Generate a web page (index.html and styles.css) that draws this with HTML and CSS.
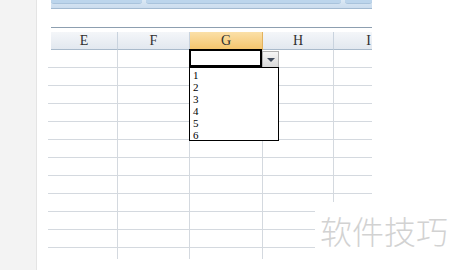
FILE: index.html
```html
<!DOCTYPE html>
<html>
<head>
  <meta charset="UTF-8">
  <title>数据有效性下拉列表</title>
  <link rel="stylesheet" href="styles.css">
</head>
<body>
  <div class="side"></div>
  <div class="main">
    <!-- 功能区底边 -->
    <div class="ribbon">
      <span class="seg s1"></span>
      <span class="seg s2"></span>
      <span class="seg s3"></span>
    </div>

    <div class="sheet">
      <div class="rule"></div>
      <div class="row head">
        <div class="col">E</div>
        <div class="col">F</div>
        <div class="col sel">G</div>
        <div class="col">H</div>
        <div class="col">I</div>
      </div>

      <div class="row">
        <div class="cell"></div>
        <div class="cell"></div>
        <div class="cell active">
          <div class="drop-btn"><span class="tri"></span></div>
          <ul class="drop-list">
            <li>1</li>
            <li>2</li>
            <li>3</li>
            <li>4</li>
            <li>5</li>
            <li>6</li>
          </ul>
        </div>
        <div class="cell"></div>
        <div class="cell"></div>
      </div>
      <div class="row"><div class="cell"></div><div class="cell"></div><div class="cell"></div><div class="cell"></div><div class="cell"></div></div>
      <div class="row"><div class="cell"></div><div class="cell"></div><div class="cell"></div><div class="cell"></div><div class="cell"></div></div>
      <div class="row"><div class="cell"></div><div class="cell"></div><div class="cell"></div><div class="cell"></div><div class="cell"></div></div>
      <div class="row"><div class="cell"></div><div class="cell"></div><div class="cell"></div><div class="cell"></div><div class="cell"></div></div>
      <div class="row"><div class="cell"></div><div class="cell"></div><div class="cell"></div><div class="cell"></div><div class="cell"></div></div>
      <div class="row"><div class="cell"></div><div class="cell"></div><div class="cell"></div><div class="cell"></div><div class="cell"></div></div>
      <div class="row"><div class="cell"></div><div class="cell"></div><div class="cell"></div><div class="cell"></div><div class="cell"></div></div>
      <div class="row"><div class="cell"></div><div class="cell"></div><div class="cell"></div><div class="cell"></div><div class="cell"></div></div>
      <div class="row"><div class="cell"></div><div class="cell"></div><div class="cell"></div><div class="cell"></div><div class="cell"></div></div>
      <div class="row"><div class="cell"></div><div class="cell"></div><div class="cell"></div><div class="cell"></div><div class="cell"></div></div>
      <div class="row last"><div class="cell"></div><div class="cell"></div><div class="cell"></div><div class="cell"></div><div class="cell"></div></div>
    </div>

    <!-- 水印 -->
    <div class="watermark">软件技巧</div>
  </div>
</body>
</html>
```

FILE: styles.css
```css
html, body {
  width: 450px;
  height: 270px;
  margin: 0;
  overflow: hidden;
}

body {
  display: flex;
  background: #fff;
  font-family: "Liberation Serif", "Noto Sans CJK SC", serif;
}

.side {
  width: 36px;
  background-color: #f3f3f3;
  border-right: 1px solid #e4e4e4;
}

.main {
  flex: 1;
  position: relative;
  padding-left: 11px;
}

.ribbon {
  display: flex;
  gap: 4px;
  width: 321px;
  height: 8px;
  margin-left: 3px;
  background: linear-gradient(to bottom, #dbe8f4, #cbdcee);
  border-bottom: 1px solid #a3bad1;
}

.seg {
  height: 3px;
  background-color: #bcd5ec;
  border-bottom: 1px solid #a9c3dc;
  border-radius: 0 0 3px 3px;
}

.s1 { width: 91px; }
.s2 { width: 195px; }
.s3 { flex: 1; }

.sheet {
  width: 324px;
}

.rule {
  height: 1px;
  margin: 18px 0 0 3px;
  background-color: #8d9fb0;
}

.row {
  display: grid;
  grid-template-columns: 70px 72px 73px 71px 38px;
  height: 18px;
}

.cell {
  border-right: 1px solid #d4d9df;
  border-bottom: 1px solid #d4d9df;
}

.row .cell:last-child {
  border-right: none;
}

.row.last {
  height: 11px;
}

.row.last .cell {
  border-bottom: none;
}

.head {
  grid-template-columns: 67px 72px 73px 71px 38px;
  margin: 4px 0 0 3px;
}

.col {
  display: flex;
  align-items: center;
  justify-content: center;
  font-size: 14px;
  color: #2f2f2f;
  background: linear-gradient(to bottom, #f4f6f9, #e2e8ef);
  border-right: 1px solid #c9d3de;
  border-bottom: 1px solid #a9bacb;
}

.col:last-child {
  border-right: none;
  justify-content: flex-end;
  padding-right: 1px;
}

.col.sel {
  background: linear-gradient(to bottom, #fbe0a8, #f4c56e);
  border-right-color: #e2b25e;
  border-bottom-color: #d8a64f;
}

.active {
  position: relative;
}

.active::after {
  content: "";
  position: absolute;
  left: -1px;
  top: -1px;
  right: 0;
  bottom: 0;
  border: 2px solid #000;
}

.drop-btn {
  position: absolute;
  left: 72px;
  top: 1px;
  width: 15px;
  height: 15px;
  display: flex;
  align-items: center;
  justify-content: center;
  background: linear-gradient(to bottom, #f6f6f6, #d9d9d9);
  border: 1px solid #b0b0b0;
  z-index: 2;
}

.tri {
  width: 0;
  height: 0;
  border-left: 4px solid transparent;
  border-right: 4px solid transparent;
  border-top: 4px solid #3f4a5c;
}

.drop-list {
  position: absolute;
  left: -1px;
  top: 17px;
  box-sizing: border-box;
  width: 90px;
  height: 74px;
  margin: 0;
  padding: 1px 0 0 3px;
  list-style: none;
  background: #fff;
  border: 1px solid #000;
  z-index: 3;
}

.drop-list li {
  height: 12px;
  line-height: 12px;
  font-size: 11px;
  color: #000;
}

.watermark {
  position: absolute;
  left: 278px;
  top: 202px;
  right: 0;
  bottom: 0;
  padding: 11px 0 0 5px;
  background: #fff;
  font-family: "Noto Sans CJK SC", sans-serif;
  font-size: 32px;
  font-weight: 300;
  line-height: 1.1;
  color: #d2d2d2;
}
```
